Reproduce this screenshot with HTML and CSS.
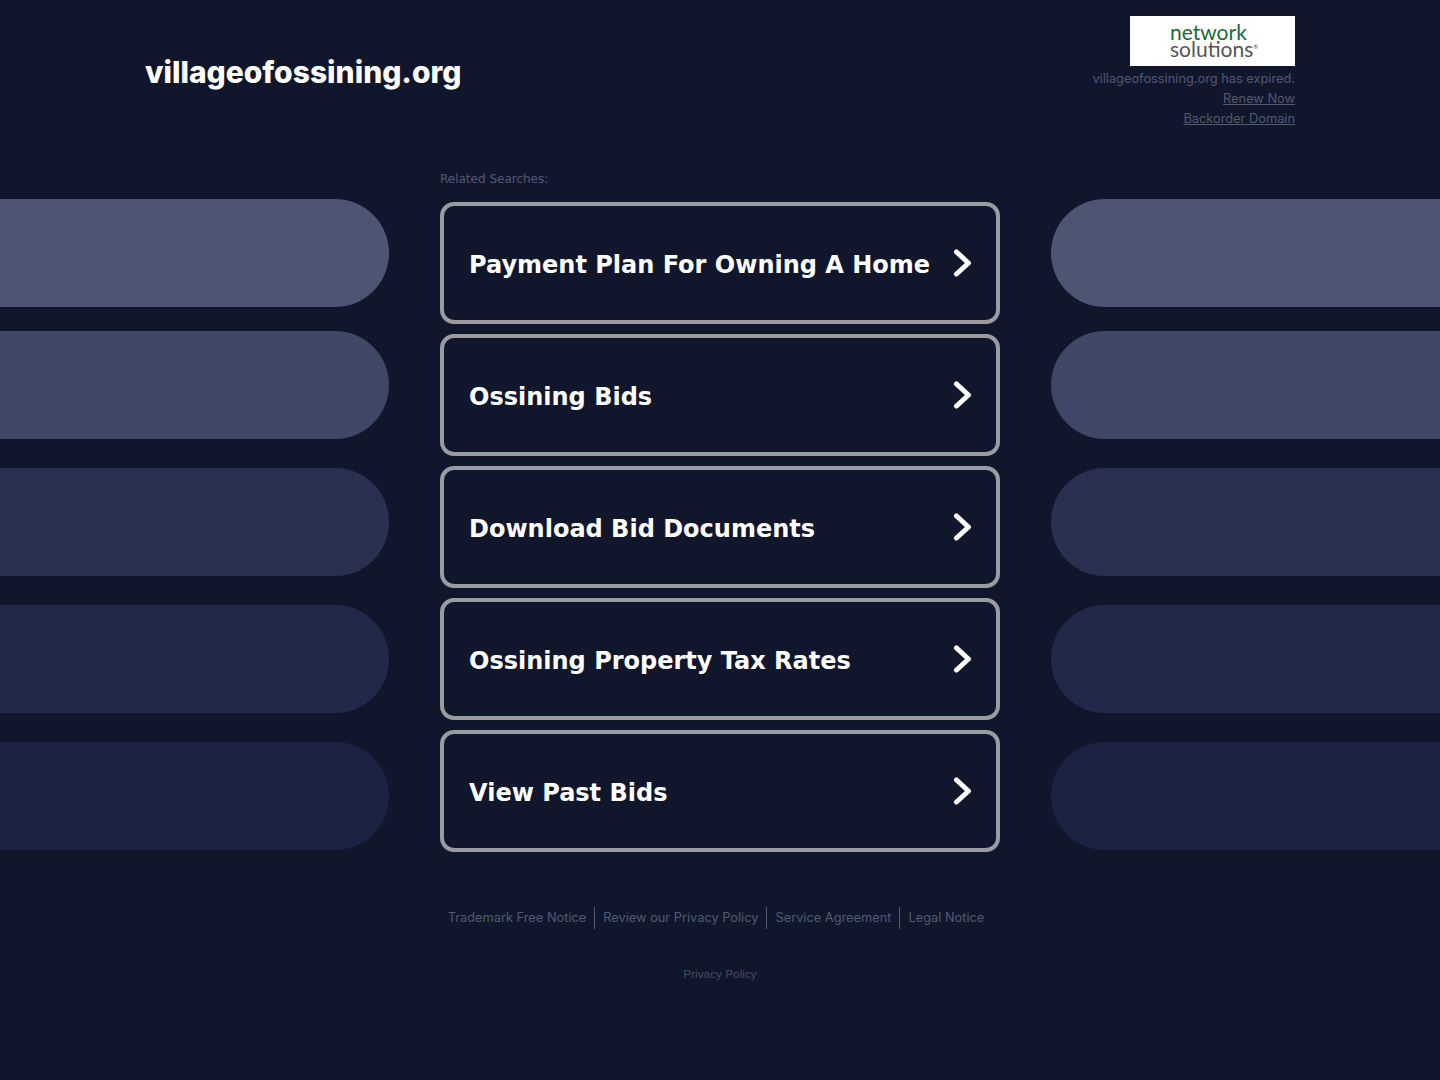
FILE: index.html
```html
<!DOCTYPE html>
<html lang="en">
<head>
<meta charset="utf-8">
<title>villageofossining.org</title>
<link rel="stylesheet" href="styles.css">
</head>
<body>
<header class="header">
  <h1 class="domain">villageofossining.org</h1>
  <div class="expiry">
    <div class="logo"><span class="logo-top">network</span><span class="logo-bottom">solutions<sup class="reg">®</sup></span></div>
    <p class="expiry-line">villageofossining.org has expired.</p>
    <a class="expiry-link" href="#">Renew Now</a>
    <a class="expiry-link" href="#">Backorder Domain</a>
  </div>
</header>
<main class="stage">
  <div class="side side-left">
    <div class="pill pill-1"></div>
    <div class="pill pill-2"></div>
    <div class="pill pill-3"></div>
    <div class="pill pill-4"></div>
    <div class="pill pill-5"></div>
  </div>
  <section class="center">
    <p class="related">Related Searches:</p>
    <a class="result" href="#"><span>Payment Plan For Owning A Home</span><svg class="chev" viewBox="0 0 20 30"><path d="M4.5 4 L16.5 15 L4.5 26"/></svg></a>
    <a class="result" href="#"><span>Ossining Bids</span><svg class="chev" viewBox="0 0 20 30"><path d="M4.5 4 L16.5 15 L4.5 26"/></svg></a>
    <a class="result" href="#"><span>Download Bid Documents</span><svg class="chev" viewBox="0 0 20 30"><path d="M4.5 4 L16.5 15 L4.5 26"/></svg></a>
    <a class="result" href="#"><span>Ossining Property Tax Rates</span><svg class="chev" viewBox="0 0 20 30"><path d="M4.5 4 L16.5 15 L4.5 26"/></svg></a>
    <a class="result" href="#"><span>View Past Bids</span><svg class="chev" viewBox="0 0 20 30"><path d="M4.5 4 L16.5 15 L4.5 26"/></svg></a>
  </section>
  <div class="side side-right">
    <div class="pill pill-1"></div>
    <div class="pill pill-2"></div>
    <div class="pill pill-3"></div>
    <div class="pill pill-4"></div>
    <div class="pill pill-5"></div>
  </div>
</main>
<footer class="footer">
  <nav class="legal">
    <a href="#">Trademark Free Notice</a>
    <a href="#">Review our Privacy Policy</a>
    <a href="#">Service Agreement</a>
    <a href="#">Legal Notice</a>
  </nav>
  <a class="privacy" href="#">Privacy Policy</a>
</footer>
</body>
</html>
```
FILE: styles.css
```css
* { box-sizing: border-box; }
html, body { margin: 0; padding: 0; }
body {
  width: 1440px;
  height: 1080px;
  overflow: hidden;
  background: #10172d;
  font-family: "DejaVu Sans", sans-serif;
  color: #fff;
}
a { color: inherit; }
.header {
  display: flex;
  justify-content: space-between;
  align-items: flex-start;
  height: 170px;
  padding: 16px 145px 0;
}
.domain {
  margin: 35px 0 0;
  font: 800 30px/42px Inter, sans-serif;
  color: #fff;
}
.expiry {
  display: flex;
  flex-direction: column;
  align-items: flex-end;
  font-family: Inter, sans-serif;
  font-size: 12.8px;
  line-height: 20px;
  color: #525971;
}
.logo {
  width: 165px;
  height: 50px;
  margin-bottom: 3px;
  padding: 7px 0 0 40px;
  background: #fff;
  display: flex;
  flex-direction: column;
  font-family: Lato, sans-serif;
  font-size: 21px;
  line-height: 17px;
}
.logo-top { color: #1b6b35; }
.logo-bottom { color: #555; }
.reg { font-size: 6px; line-height: 0; }
.expiry-line { margin: 0; }
.center { width: 560px; }
.related {
  margin: 0 0 14px;
  height: 18px;
  font-size: 12px;
  line-height: 18px;
  color: #525971;
}
.stage {
  display: grid;
  grid-template-columns: 440px 560px 440px;
}
.side { padding-top: 29px; display: flex; flex-direction: column; gap: 29px; }
.side-left { align-items: flex-start; }
.side-right { align-items: flex-end; }
.pill { width: 389px; height: 108px; }
.side .pill-2 { margin-top: -5px; }
.side-left .pill { border-radius: 0 54px 54px 0; }
.side-right .pill { border-radius: 54px 0 0 54px; }
.pill-1 { background: #4d5573; }
.pill-2 { background: #3f4766; }
.pill-3 { background: #293050; }
.pill-4 { background: #212948; }
.pill-5 { background: #1c2342; }
.result {
  display: flex;
  justify-content: space-between;
  align-items: center;
  height: 122px;
  margin-bottom: 10px;
  padding: 4px 24px 0 25px;
  border: 4px solid #9a9c9f;
  border-radius: 14px;
  text-decoration: none;
  color: #fff;
  font-size: 24px;
  font-weight: 700;
}
.result span { white-space: nowrap; }
.chev { width: 20px; height: 30px; margin-top: -4px; fill: none; stroke: #fff; stroke-width: 5px; stroke-linecap: round; stroke-linejoin: round; }
.footer {
  display: flex;
  flex-direction: column;
  align-items: center;
  padding-top: 45px;
}
.legal { display: flex; font-family: Inter, sans-serif; font-size: 12.8px; line-height: 22px; color: #525971; margin-left: -8px; }
.legal a { text-decoration: none; padding: 0 8px; border-left: 1px solid #525971; }
.legal a:first-child { border-left: 0; }
.privacy { margin-top: 37px; font: 11.8px/16px "Liberation Sans", sans-serif; color: #454c64; text-decoration: none; }
```
